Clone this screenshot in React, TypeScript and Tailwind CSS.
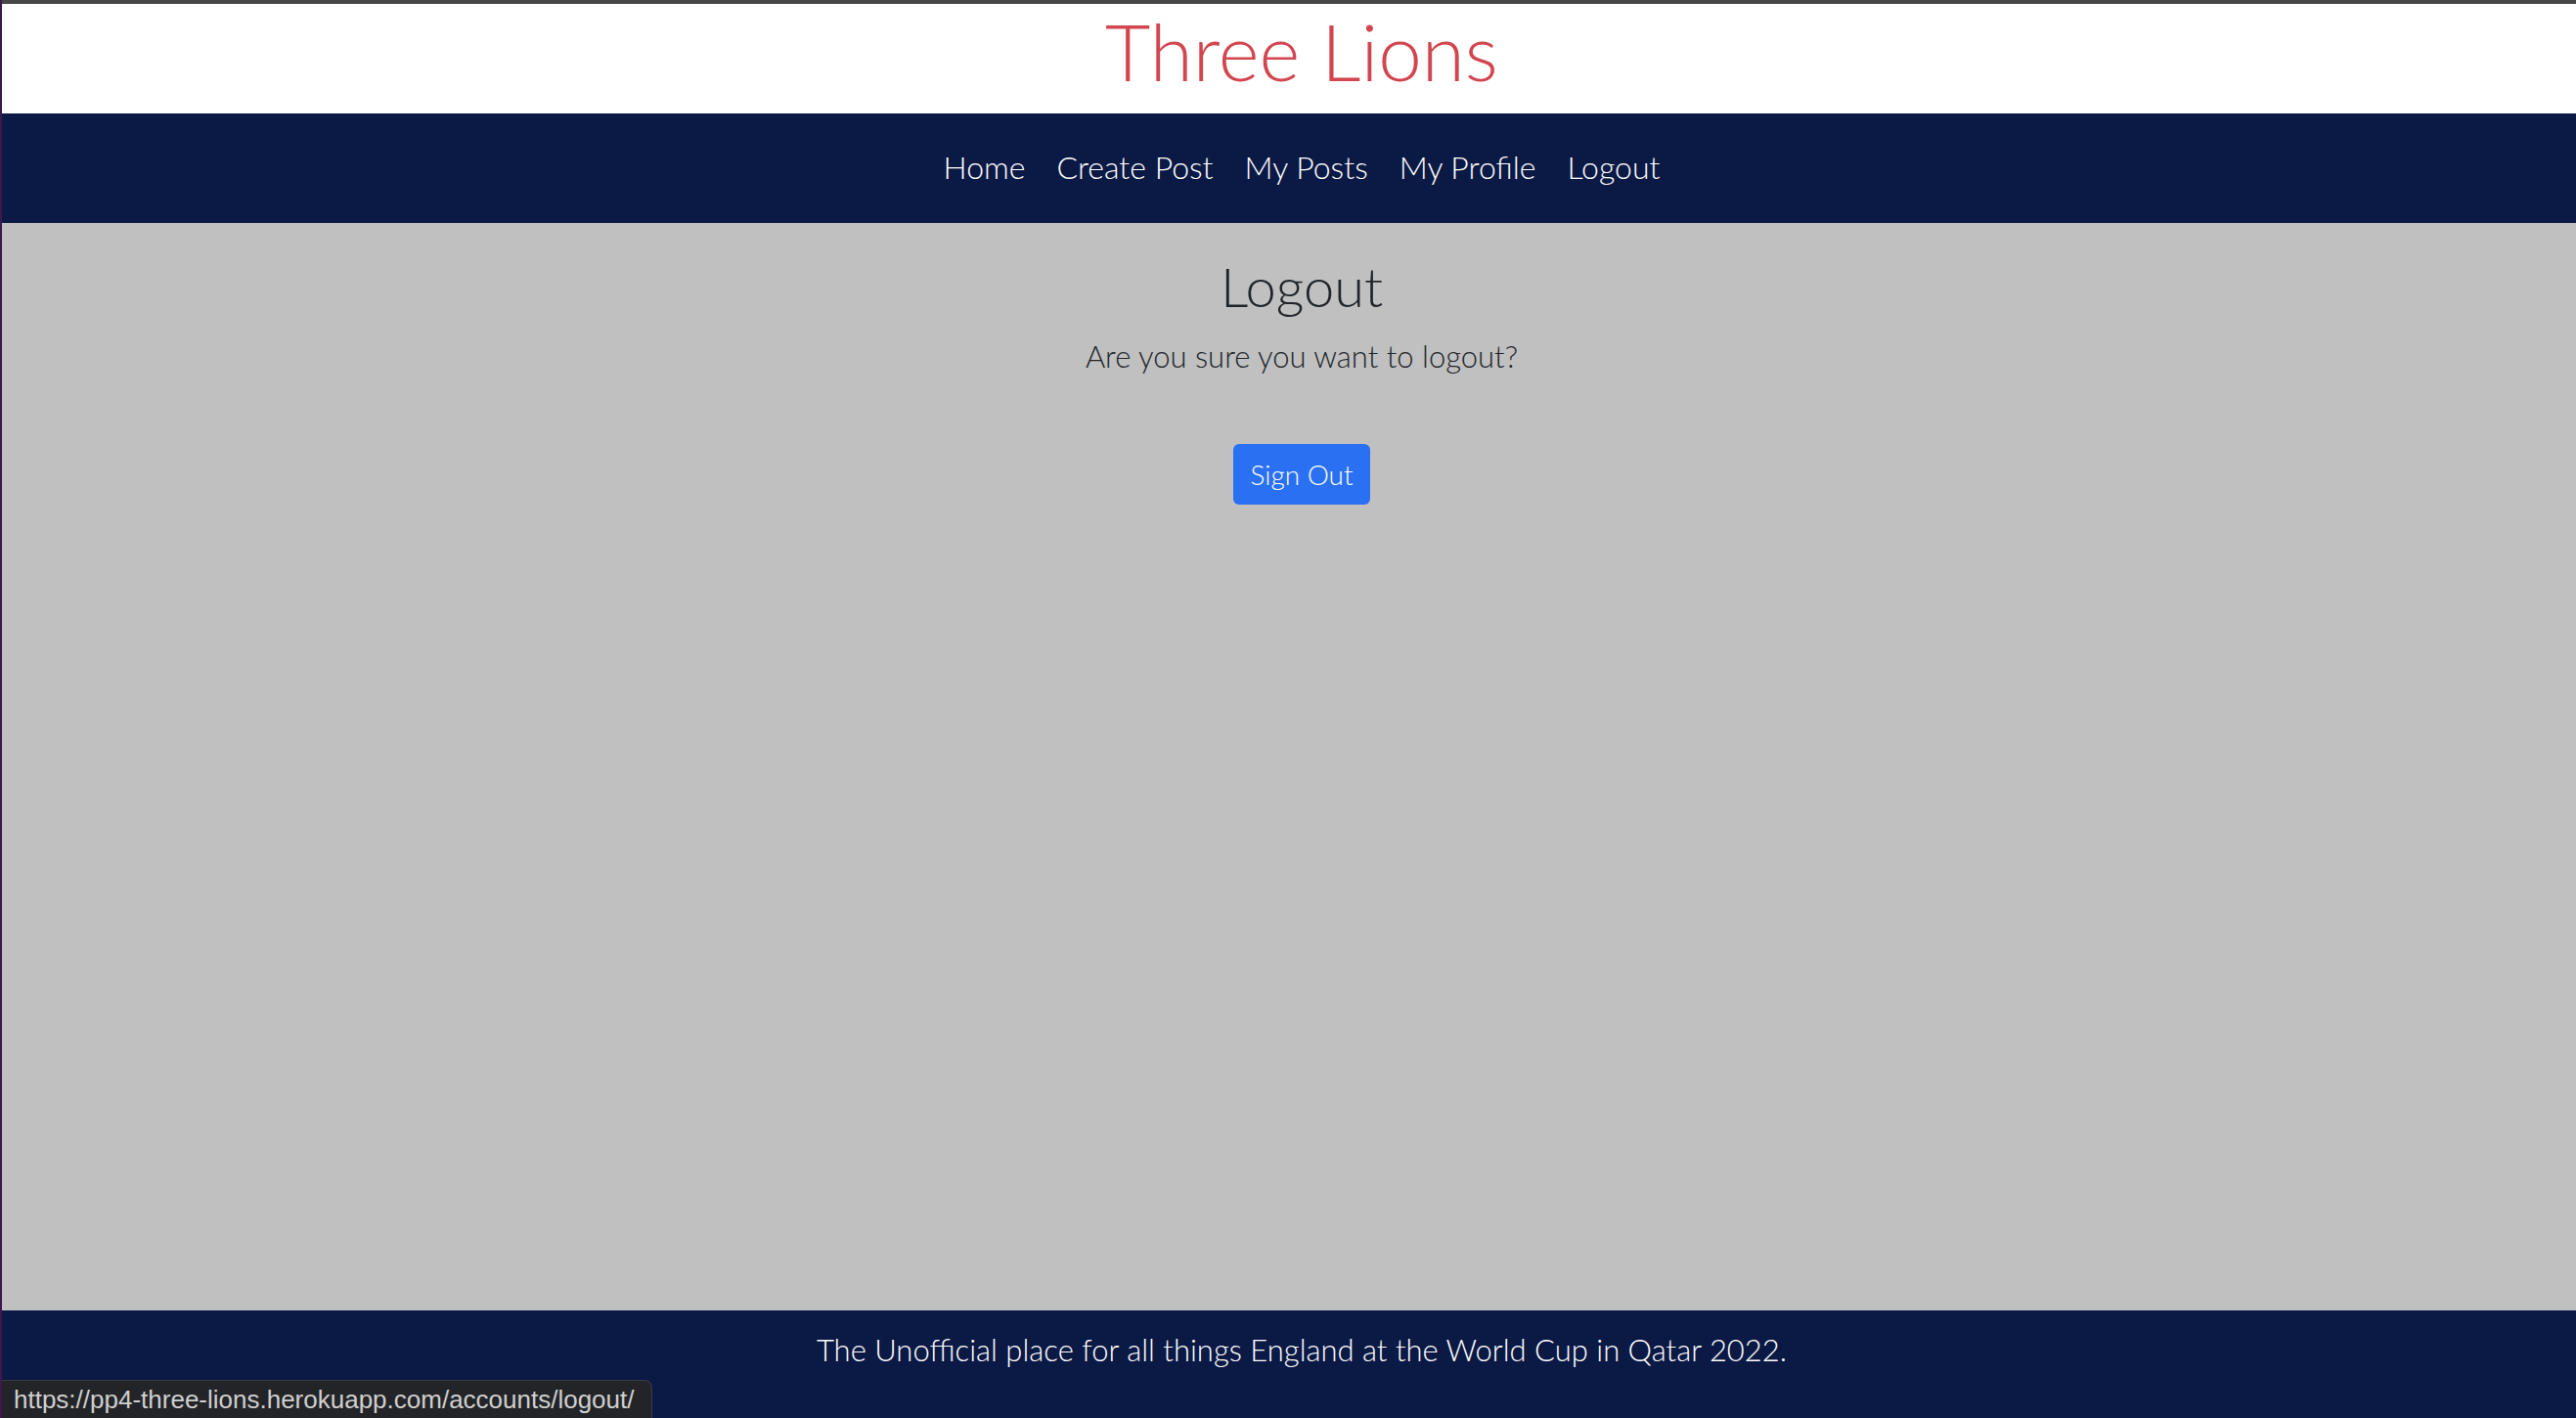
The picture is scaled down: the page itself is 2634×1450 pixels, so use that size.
export default function App() {
  const links = ["Home", "Create Post", "My Posts", "My Profile", "Logout"];

  return (
    <div className="relative h-[1450px] flex flex-col border-l-2 border-[#3f1650] font-['Lato','Liberation_Sans',sans-serif] font-light overflow-hidden">
      <div className="h-[4px] bg-[#474747]" />
      <header className="h-[112px] bg-white flex justify-center pl-[26px]">
        <h1 className="text-[80px] leading-[1.2] text-[#d2464f] font-light">
          Three Lions
        </h1>
      </header>
      <nav className="h-[112px] bg-[#0b1945] flex items-center justify-center gap-[32px] pl-[26px] pb-[2px]">
        {links.map((link) => (
          <a key={link} href="#" className="text-white text-[32px] leading-[1.5]">
            {link}
          </a>
        ))}
      </nav>
      <main className="flex-1 bg-[#c0c0c0] flex flex-col items-center pt-[31px] pl-[26px] text-[#212529]">
        <h2 className="text-[56px] leading-[1.2] font-light">Logout</h2>
        <p className="mt-[15px] text-[31px] leading-[1.5]">
          Are you sure you want to logout?
        </p>
        <button className="mt-[66px] h-[62px] w-[140px] rounded-[6px] bg-[#2a70f2] text-white text-[28px] leading-[1.5] flex items-center justify-center font-light">
          Sign Out
        </button>
      </main>
      <footer className="h-[110px] bg-[#0b1945] flex justify-center pt-[17px] pl-[26px]">
        <p className="text-white text-[31px] leading-[1.5]">
          The Unofficial place for all things England at the World Cup in Qatar 2022.
        </p>
      </footer>
      <div className="absolute left-0 bottom-0 h-[39px] w-[665px] bg-[#232427] rounded-tr-[8px] flex items-center pl-[12px] border-t border-r border-[#3a3a3e]">
        <span className="font-['Liberation_Sans',sans-serif] font-normal text-[26px] text-[#cfcfcf]">
          https://pp4-three-lions.herokuapp.com/accounts/logout/
        </span>
      </div>
    </div>
  );
}
